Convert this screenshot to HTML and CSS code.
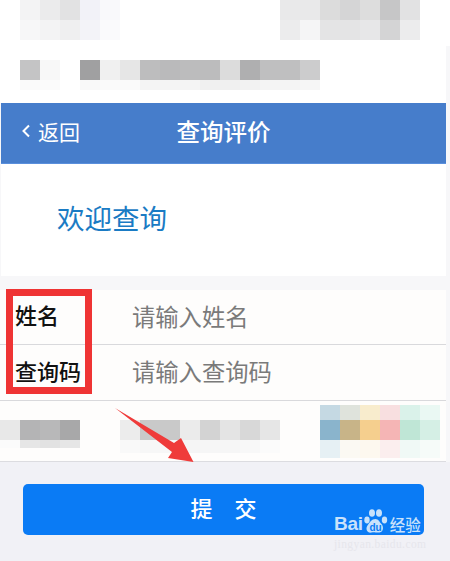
FILE: index.html
```html
<!DOCTYPE html>
<html lang="zh">
<head>
<meta charset="utf-8">
<title>查询评价</title>
<link rel="stylesheet" href="styles.css">
</head>
<body>
<div class="page">
  <section class="mosaic-top">
    <div class="mrow">
      <span class="c" style="background:#f3f3f4"></span><span class="c" style="background:#ebebec"></span><span class="c" style="background:#e2e2e3"></span><span class="c" style="background:#f2f2f8"></span><span class="c" style="background:#f9f9fb"></span>
      <span class="gap w160"></span>
      <span class="c" style="background:#e9e9ea"></span><span class="c" style="background:#e9e9ea"></span><span class="c" style="background:#dcdcdc"></span><span class="c" style="background:#d5d5d6"></span><span class="c" style="background:#dddddd"></span><span class="c" style="background:#c6c6c7"></span><span class="c" style="background:#e2e2e3"></span>
    </div>
    <div class="mrow">
      <span class="c" style="background:#f7f7f8"></span><span class="c" style="background:#f3f3f4"></span><span class="c" style="background:#efeff0"></span><span class="c" style="background:#f3f3f8"></span><span class="c" style="background:#fafafc"></span>
      <span class="gap w160"></span>
      <span class="c" style="background:#ececed"></span><span class="c" style="background:#f5f5f6"></span><span class="c" style="background:#e4e4e5"></span><span class="c" style="background:#e4e4e5"></span><span class="c" style="background:#e7e7e8"></span><span class="c" style="background:#d4d4d5"></span><span class="c" style="background:#ececed"></span>
    </div>
  </section>

  <section class="mosaic-mid">
    <div class="mrow">
      <span class="c" style="background:#c4c4c5"></span><span class="c" style="background:#f8f8f8"></span><span class="gap w20"></span><span class="c" style="background:#a0a0a1"></span><span class="c" style="background:#f0f0f0"></span><span class="c" style="background:#e6e6e6"></span><span class="c" style="background:#bdbdbe"></span><span class="c" style="background:#bababb"></span><span class="c" style="background:#bcbcbd"></span><span class="c" style="background:#bcbcbd"></span><span class="c" style="background:#dcdcdc"></span><span class="c" style="background:#afafb0"></span><span class="c" style="background:#bfbfc0"></span><span class="c" style="background:#bfbfc0"></span><span class="c" style="background:#cccccd"></span>
    </div>
    <div class="mrow short">
      <span class="c" style="background:#fafafa"></span><span class="c" style="background:#fbfbfb"></span><span class="gap w20"></span><span class="c" style="background:#f9f9f9"></span><span class="c" style="background:#fafafa"></span><span class="c" style="background:#fafafa"></span><span class="c" style="background:#f4f4f4"></span><span class="c" style="background:#f4f4f4"></span><span class="c" style="background:#f4f4f4"></span><span class="c" style="background:#f0f0f0"></span><span class="c" style="background:#f0f0f0"></span><span class="c" style="background:#f2f2f2"></span><span class="c" style="background:#f4f4f4"></span><span class="c" style="background:#f4f4f4"></span><span class="c" style="background:#f6f6f6"></span>
    </div>
  </section>

  <header class="nav">
    <span class="back">
      <svg class="chev" width="10" height="14" viewBox="0 0 10 14"><path d="M8 1.5 2.5 7 8 12.5" fill="none" stroke="#fff" stroke-width="2"/></svg>
      <span>返回</span>
    </span>
    <h1 class="title">查询评价</h1>
  </header>

  <section class="welcome">欢迎查询</section>

  <form class="form">
    <label class="row">
      <span class="label">姓名</span>
      <input class="field" type="text" placeholder="请输入姓名">
    </label>
    <label class="row tall">
      <span class="label">查询码</span>
      <input class="field" type="text" placeholder="请输入查询码">
    </label>
    <div class="strip">
      <div class="mrow faint">
        <span class="gap w320"></span>
        <span class="c" style="background:#c5d9e3"></span><span class="c" style="background:#dfe3dc"></span><span class="c" style="background:#f8eccd"></span><span class="c" style="background:#f8dfe0"></span><span class="c" style="background:#daf2ea"></span><span class="c" style="background:#eaf8f3"></span>
      </div>
      <div class="mrow">
        <span class="c" style="background:#e8e8e8"></span><span class="c" style="background:#b4b4b5"></span><span class="c" style="background:#b8b8b9"></span><span class="c" style="background:#a8a8a9"></span>
        <span class="gap w40"></span>
        <span class="c" style="background:#ececec"></span><span class="c" style="background:#c9c9c9"></span><span class="c" style="background:#c9c9c9"></span><span class="c" style="background:#ebebeb"></span><span class="c" style="background:#d3d3d3"></span><span class="c" style="background:#e4e4e4"></span><span class="c" style="background:#d8d8d8"></span><span class="c" style="background:#e6e6e6"></span>
        <span class="gap w40"></span>
        <span class="c" style="background:#8ab4cc"></span><span class="c" style="background:#c8b488"></span><span class="c" style="background:#f5cf8e"></span><span class="c" style="background:#f5b5b5"></span><span class="c" style="background:#bfe6d6"></span><span class="c" style="background:#d5efe5"></span>
      </div>
      <div class="mrow low">
        <span class="c low-a" style="background:#fbfbfb"></span><span class="c low-a" style="background:#e6e6e6"></span><span class="c low-a" style="background:#e2e2e2"></span><span class="c low-a" style="background:#e6e6e6"></span>
        <span class="gap w40"></span>
        <span class="c low-b" style="background:#f9f9f9"></span><span class="c low-b" style="background:#f7f7f7"></span><span class="c low-b" style="background:#f7f7f7"></span><span class="c low-b" style="background:#f5f5f5"></span><span class="c low-b" style="background:#f6f6f6"></span><span class="c low-b" style="background:#f6f6f6"></span><span class="c low-b" style="background:#f8f8f8"></span><span class="c low-b" style="background:#fbfbfb"></span>
        <span class="gap w40"></span>
        <span class="c" style="background:#e6f0f4"></span><span class="c" style="background:#fbf9f3"></span><span class="c" style="background:#fdf8ef"></span><span class="c" style="background:#fbeeee"></span><span class="c" style="background:#f0f9f6"></span><span class="c" style="background:#f6fbf9"></span>
      </div>
    </div>
    <div class="actions">
      <button class="submit" type="button">提　交</button>
    </div>
  </form>
</div>

<div class="redbox"></div>
<svg class="arrow" width="80" height="56" viewBox="0 0 80 56">
  <path d="M0 0 59 35 66 30 78.500 54 53 50 57 44Z" fill="#ef3b3a"/>
</svg>

<div class="mark">
  <div class="mark-line">
    <span class="bai">Bai</span>
    <svg class="paw" width="27" height="27" viewBox="0 0 27 27">
      <ellipse cx="5" cy="12" rx="2.700" ry="3.400" fill="#c9e2fb"/>
      <ellipse cx="10" cy="5" rx="3" ry="3.800" fill="#c9e2fb"/>
      <ellipse cx="17" cy="5" rx="3" ry="3.800" fill="#c9e2fb"/>
      <ellipse cx="22.500" cy="12" rx="2.700" ry="3.400" fill="#c9e2fb"/>
      <path d="M13.500 11c3 0 4 3 6 5s2.500 8-2 8.500-4-1-8 0-6.500-3.500-4-7 4-6.500 8-6.500Z" fill="#c9e2fb"/>
      <text x="13.500" y="22.500" class="du">du</text>
    </svg>
    <span class="jy">经验</span>
  </div>
  <div class="url">jingyan.baidu.com</div>
</div>
</body>
</html>
```

FILE: styles.css
```css
* { box-sizing: border-box; }
html, body { margin: 0; padding: 0; }
body {
  width: 450px;
  height: 561px;
  overflow: hidden;
  position: relative;
  background: #f7f7f9;
  font-family: "Noto Sans CJK SC", "Noto Sans", sans-serif;
}
.page { width: 450px; display: flex; flex-direction: column; }

.mrow { display: flex; height: 20px; }
.mrow.short { height: 10px; }
.mrow.faint { height: 15px; }
.mrow.low { height: 18px; }
.c { width: 20px; height: 100%; flex: none; }
.c.low-a { height: 8px; }
.c.low-b { height: 13px; }
.gap { flex: none; }
.w20 { width: 20px; }
.w40 { width: 40px; }
.w160 { width: 160px; }
.w320 { width: 320px; }

.mosaic-top { height: 46px; padding-left: 20px; background: #fff; }
.mosaic-mid {
  height: 57px;
  padding: 14px 0 0 20px;
  background: #fff;
  margin-right: 4px;
}

.nav {
  height: 61px;
  margin: 0 4px 0 1px;
  padding-bottom: 4px;
  background: #467dcb;
  color: #fff;
  position: relative;
  display: flex;
  align-items: center;
  justify-content: center;
  border-bottom: 1px solid #5a8fdc;
}
.back {
  position: absolute;
  left: 20px;
  top: 13px;
  display: flex;
  align-items: center;
  gap: 7px;
  font-size: 21px;
  line-height: 30px;
}
.chev { display: block; }
.title {
  margin: 0;
  font-size: 23.500px;
  font-weight: 500;
  line-height: 30px;
}

.welcome {
  height: 112px;
  margin: 0 4px 0 1px;
  padding: 35px 0 0 56px;
  background: #fff;
  color: #1a7bc4;
  font-size: 27.500px;
  line-height: 36px;
}

.form {
  margin-top: 14px;
  display: flex;
  flex-direction: column;
}
.row {
  height: 55px;
  margin-right: 4px;
  background: #fefdfc;
  border-bottom: 1px solid #d9d9dc;
  display: flex;
  align-items: center;
  padding: 0 0 3px 15px;
}
.row.tall { height: 56px; }
.label {
  width: 117px;
  color: #111;
  font-size: 22px;
  font-weight: 500;
  line-height: 30px;
  padding-bottom: 3px;
}
.field {
  flex: 1;
  min-width: 0;
  border: 0;
  padding: 0;
  outline: 0;
  background: transparent;
  font-family: inherit;
  font-size: 23.300px;
  line-height: 30px;
}
.field::placeholder { color: #7a7a7a; opacity: 1; }

.strip {
  height: 61px;
  margin-right: 4px;
  padding-top: 4px;
  background: #fefdfc;
  border-bottom: 1px solid #dcdce0;
}

.actions {
  flex: none;
  height: 99px;
  padding: 22px 26px 0 23px;
  background: #f1f1f6;
}
.submit {
  display: block;
  width: 401px;
  height: 51px;
  padding: 0 0 6px;
  border: 0;
  border-radius: 5px;
  background: #0a7bf5;
  color: #fff;
  font-family: inherit;
  font-size: 22px;
  font-weight: 500;
  line-height: 30px;
}

.redbox {
  position: absolute;
  left: 6px;
  top: 289px;
  width: 86px;
  height: 105px;
  border: 7px solid #ef3434;
}
.arrow {
  position: absolute;
  left: 115px;
  top: 408px;
  overflow: visible;
}

.mark {
  position: absolute;
  left: 334px;
  top: 507px;
  width: 110px;
  color: #c9e2fb;
}
.mark-line { display: flex; align-items: flex-end; height: 28px; }
.bai {
  font-family: "Liberation Sans", sans-serif;
  font-size: 19px;
  font-weight: 700;
  line-height: 22px;
  letter-spacing: -0.3px;
}
.paw { flex: none; margin: 0 0 0 -1px; }
.du {
  font-family: "Liberation Sans", sans-serif;
  font-size: 10px;
  font-weight: 700;
  fill: #0a7bf5;
  text-anchor: middle;
}
.jy { font-size: 15.500px; line-height: 22px; font-weight: 500; margin-left: 1px; white-space: nowrap; }
.url {
  font-family: "Liberation Serif", serif;
  font-size: 11.500px;
  line-height: 12px;
  color: #e6e6ec;
  letter-spacing: 0.4px;
  margin-top: 3px;
  white-space: nowrap;
}
```
